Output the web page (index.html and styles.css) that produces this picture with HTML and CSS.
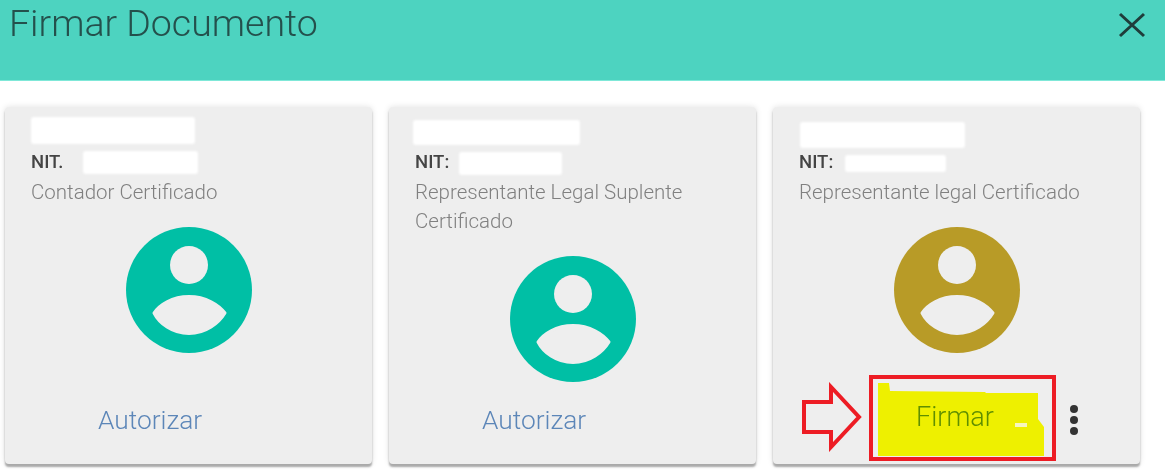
FILE: index.html
```html
<!DOCTYPE html>
<html lang="es">
<head>
    <meta charset="UTF-8">
    <title>Firmar Documento</title>
    <link rel="stylesheet" href="styles.css">
</head>
<body>
    <header class="dialog-header">
        <h1 class="dialog-title">Firmar Documento</h1>
        <button class="close-button" aria-label="Cerrar">
            <svg width="28" height="26" viewBox="0 0 28 26"><path d="M2 2 26 24M26 2 2 24" fill="none" stroke="#1f3d3a" stroke-width="3"/></svg>
        </button>
    </header>

    <main class="signers">
        <section class="card card-first">
            <div class="name-line"><span class="blot blot-name"></span></div>
            <p class="nit">NIT.<span class="blot blot-nit"></span></p>
            <p class="role">Contador Certificado</p>
            <svg class="avatar avatar-green" viewBox="0 0 126 126"><use href="#person"/></svg>
            <div class="card-actions"><button class="action">Autorizar</button></div>
        </section>

        <section class="card card-second">
            <div class="name-line"><span class="blot blot-name"></span></div>
            <p class="nit">NIT:<span class="blot blot-nit"></span></p>
            <p class="role">Representante Legal Suplente Certificado</p>
            <svg class="avatar avatar-green" viewBox="0 0 126 126"><use href="#person"/></svg>
            <div class="card-actions"><button class="action">Autorizar</button></div>
        </section>

        <section class="card card-third">
            <div class="name-line"><span class="blot blot-name"></span></div>
            <p class="nit">NIT:<span class="blot blot-nit"></span></p>
            <p class="role">Representante legal Certificado</p>
            <svg class="avatar avatar-gold" viewBox="0 0 126 126"><use href="#person"/></svg>
            <div class="card-actions">
                <div class="sign-box">
                    <button class="sign-button"><span class="sign-label">Firmar</span><span class="sign-dash"></span></button>
                </div>
                <span class="more"><i></i><i></i><i></i></span>
            </div>
            <svg class="arrow" width="62" height="70" viewBox="0 0 62 70"><path d="M2 20H29V5L57 35 29 65V50H2Z" fill="none" stroke="#ed1c24" stroke-width="4"/></svg>
        </section>
    </main>

    <svg width="0" height="0" class="defs">
        <symbol id="person" viewBox="0 0 126 126">
            <circle cx="63" cy="63" r="63" fill="currentColor"/>
            <circle cx="63" cy="38" r="19" fill="#eee"/>
            <path d="M28 86C33 78 46 69.5 63 69.5S93 78 99 86C93 96 80 106.5 63 106.5S33 96 28 86Z" fill="#eee" stroke="#eee" stroke-width="3" stroke-linejoin="round"/>
        </symbol>
    </svg>
</body>
</html>
```

FILE: styles.css
```css
html,
body {
    height: 100%;
}

body {
    margin: 0;
    background-color: #fff;
    font-family: Roboto, Arial, sans-serif;
    overflow: hidden;
}

.defs {
    display: block;
    height: 0;
}

.dialog-header {
    display: flex;
    justify-content: space-between;
    align-items: flex-start;
    height: 81px;
    padding: 0 19px 0 9px;
    background-color: #4dd3c0;
    border-bottom: 1px solid #7fe8d8;
    box-sizing: border-box;
}

.dialog-title {
    margin: 3px 0 0;
    font-size: 37.5px;
    line-height: 40px;
    font-weight: 300;
    color: #24504c;
    filter: blur(0.5px);
}

.close-button {
    margin-top: 12px;
    padding: 0;
    border: 0;
    background: none;
    line-height: 0;
}

.signers {
    display: grid;
    grid-template-columns: 367px 367px 367px;
    gap: 0 17px;
    padding: 26px 0 0 5px;
}

.card {
    position: relative;
    display: flex;
    flex-direction: column;
    height: 357px;
    padding: 10px 26px 0;
    box-sizing: border-box;
    background-color: #eee;
    border-radius: 4px;
    box-shadow: 0 3px 2px #a9a9a9, 0 0 6px rgba(0, 0, 0, 0.12);
}

.name-line {
    height: 33px;
}

.blot {
    display: block;
    flex: none;
    background-color: #fff;
    border-radius: 3px;
    filter: blur(1px);
}

.blot-name {
    width: 164px;
    height: 27px;
}

.card-second .blot-name {
    width: 167px;
    height: 25px;
    margin: 3px 0 0 -2px;
}

.card-third .blot-name {
    width: 165px;
    height: 26px;
    margin: 5px 0 0 1px;
}

.nit {
    display: flex;
    align-items: center;
    gap: 20px;
    margin: 0;
    height: 24px;
    font-size: 18.5px;
    font-weight: 500;
    color: #444;
    filter: blur(0.4px);
}

.card-second .nit {
    gap: 10px;
}

.card-third .nit {
    gap: 12px;
}

.blot-nit {
    width: 115px;
    height: 23px;
}

.card-second .blot-nit {
    width: 103px;
    margin-top: 3px;
}

.card-third .blot-nit {
    width: 101px;
    height: 17px;
    margin-top: 2px;
}

.role {
    margin: 4px 0 0;
    font-size: 20.5px;
    line-height: 29px;
    font-weight: 300;
    color: #808080;
    filter: blur(0.5px);
}

.avatar {
    display: block;
    flex: none;
    width: 126px;
    height: 126px;
    margin: 20px auto 0;
}

.avatar-green {
    color: #00bfa5;
}

.avatar-gold {
    color: #b89b27;
}

.card-actions {
    position: absolute;
    left: 0;
    right: 0;
    bottom: 0;
    display: flex;
    align-items: center;
    height: 88px;
}

.action {
    margin-left: 93px;
    padding: 0;
    border: 0;
    background: none;
    font-family: inherit;
    font-size: 26.3px;
    font-weight: 300;
    color: #5c86b8;
    filter: blur(0.5px);
}

.sign-box {
    flex: none;
    margin: 0 0 4px 96px;
    width: 187px;
    height: 86px;
    padding: 4px 8px 1px 5px;
    box-sizing: border-box;
    border: 4px solid #ed1c24;
}

.sign-button {
    position: relative;
    display: block;
    width: 100%;
    height: 100%;
    padding: 0 12px 5px 0;
    border: 0;
    background-color: #eef000;
    clip-path: polygon(0 0, 11px 0, 12px 8px, 107px 9px, 108px 10px, 160px 10px, 160px 36px, 100% 44px, 100% 100%, 0 100%);
    font-family: inherit;
    font-size: 27px;
    font-weight: 300;
    color: #5f8f00;
}

.sign-label {
    display: block;
    filter: blur(0.5px);
}

.sign-dash {
    position: absolute;
    left: 137px;
    top: 40px;
    width: 12px;
    height: 4px;
    background-color: #f6f6c0;
}

.more {
    display: flex;
    flex-direction: column;
    gap: 3px;
    margin-left: 14px;
}

.more i {
    width: 8px;
    height: 8px;
    border-radius: 50%;
    background-color: #333;
}

.arrow {
    position: absolute;
    left: 29px;
    bottom: 12px;
}
```
